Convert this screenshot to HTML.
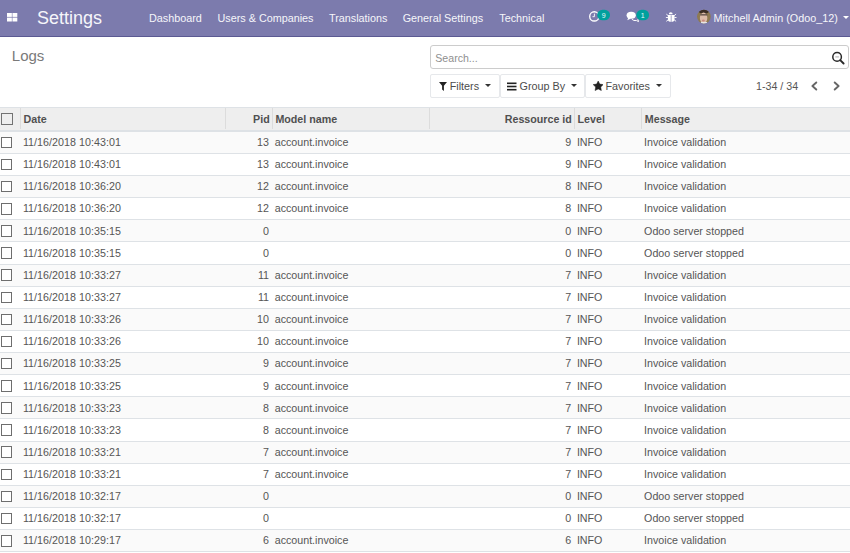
<!DOCTYPE html><html><head><meta charset="utf-8"><style>
*{box-sizing:border-box;margin:0;padding:0}
html,body{width:850px;height:553px;overflow:hidden;background:#fff}
body{position:relative;font-family:"Liberation Sans",sans-serif;font-size:10.8px;color:#555}
.a{position:absolute;white-space:pre}
#nav{position:absolute;left:0;top:0;width:850px;height:37px;background:#7c7bad;border-bottom:1.1px solid #5b5a92}
.nv{position:absolute;top:0;height:36px;line-height:36px;color:#f6f6fa;font-size:10.8px;white-space:pre}
.brand{font-size:18px}
.btn{position:absolute;top:74.2px;height:23.4px;border:1px solid #e6e8eb;border-radius:2px;background:#fff;color:#4c4c4c;line-height:21px;font-size:10.8px}
.cb{position:absolute;width:11.5px;height:11.5px;border:1.2px solid #6e6e6e;border-radius:0;background:#fff}
.hdr{position:absolute;left:0;width:850px;background:#eee}
.row{position:absolute;left:0;width:850px;border-bottom:1px solid #dee2e6}
.odd{background:#fafafa}
.cell{position:absolute;white-space:pre;line-height:22px;height:22px;font-size:10.7px}
.th{font-weight:bold;color:#505050;margin-left:0.7px}
.dt{letter-spacing:0.045px}
.vd{position:absolute;width:1px;background:#dcdcdc}
.caret{position:absolute;width:0;height:0;border-left:3px solid transparent;border-right:3px solid transparent;border-top:3.5px solid #333}
</style></head><body>
<div id="nav"></div>
<svg class="a" style="left:6.5px;top:12.7px" width="11" height="9" viewBox="0 0 11 9"><rect x="0" y="0" width="4.85" height="3.9" fill="#fff"/><rect x="5.45" y="0" width="4.85" height="3.9" fill="#fff"/><rect x="0" y="4.6" width="4.85" height="3.9" fill="#fff"/><rect x="5.45" y="4.6" width="4.85" height="3.9" fill="#fff"/></svg>
<div class="nv brand" style="left:37px">Settings</div>
<div class="nv" style="left:149px">Dashboard</div>
<div class="nv" style="left:217.5px">Users &amp; Companies</div>
<div class="nv" style="left:329px">Translations</div>
<div class="nv" style="left:402.7px">General Settings</div>
<div class="nv" style="left:499.3px">Technical</div>
<svg class="a" style="left:0;top:0" width="850" height="37" viewBox="0 0 850 37">
<circle cx="594.3" cy="16.4" r="4.6" fill="none" stroke="#fff" stroke-width="1.35"/>
<path d="M594.4 13.6 V16.7 H592.5" fill="none" stroke="#fff" stroke-width="0.9"/>
<rect x="597.2" y="9.7" width="12.8" height="10.6" rx="5.3" fill="#00a09d"/>
<text x="603.6" y="17.6" font-family="Liberation Sans" font-size="7" fill="#e8fbfa" text-anchor="middle">9</text>
<ellipse cx="631.2" cy="15.3" rx="4.6" ry="3.5" fill="#fff"/>
<path d="M628.3 17.5 L627.3 20.2 L631 18.5z" fill="#fff"/>
<path d="M631.8 19.2 Q633.5 21 636.6 20.6 L638.5 21.6 L637.9 19.4 Q638.6 18.6 638.6 17.8" fill="none" stroke="#fff" stroke-width="1"/>
<rect x="636.3" y="9.7" width="12.8" height="10.6" rx="5.3" fill="#00a09d"/>
<text x="642.7" y="17.6" font-family="Liberation Sans" font-size="7" fill="#e8fbfa" text-anchor="middle">1</text>
<path d="M668.8 14.2 A1.95 2 0 0 1 672.7 14.2z" fill="#fff"/>
<path d="M667.9 15 H674.5 V19.5 Q674.5 21.8 671.2 21.8 Q667.9 21.8 667.9 19.5z" fill="#fff"/>
<path d="M671.2 15.3 V21.8" stroke="#8a89b8" stroke-width="0.75"/>
<path d="M666.3 14.1 L668.2 15.6 M676.1 14.1 L674.2 15.6 M665.9 17.5 H668 M676.5 17.5 H674.4 M666.3 21.3 L668.2 19.9 M676.1 21.3 L674.2 19.9" stroke="#fff" stroke-width="0.9"/>
<defs><clipPath id="av"><circle cx="703.9" cy="16.6" r="6.9"/></clipPath></defs>
<g clip-path="url(#av)">
<rect x="696" y="9" width="16" height="16" fill="#8e7a52"/>
<ellipse cx="703.8" cy="11" rx="5" ry="2.6" fill="#3b2d24"/>
<ellipse cx="703.6" cy="18" rx="3.7" ry="5.4" fill="#dcbcaa"/>
<rect x="700.3" y="14.2" width="7" height="1.3" fill="#5a4a44"/>
<ellipse cx="703.4" cy="20.5" rx="1.5" ry="0.9" fill="#c98a80"/>
<rect x="701" y="22" width="6" height="3" fill="#e6e6e6"/>
</g>
</svg>
<div class="nv" style="left:713.6px">Mitchell Admin (Odoo_12)</div>
<div class="caret" style="left:842.8px;top:16.2px;border-top-color:#fff"></div>
<div class="a" style="left:11.8px;top:45.6px;font-size:15px;line-height:20px;color:#7a7a7a">Logs</div>
<div class="a" style="left:430px;top:45px;width:418.5px;height:23.5px;border:1px solid #ccc;border-radius:3px"></div>
<div class="a" style="left:435.3px;top:46.8px;line-height:23px;color:#8f8f8f;font-size:10.6px">Search...</div>
<svg class="a" style="left:830px;top:50px" width="16" height="16" viewBox="830 50 16 16"><circle cx="837.1" cy="56.9" r="4.3" fill="#fff" stroke="#2a2a2a" stroke-width="1.5"/><path d="M835.3 56.9 H838.9" stroke="#bbb" stroke-width="1.2"/><path d="M840.2 60.1 L843.6 63.5" stroke="#2a2a2a" stroke-width="1.9" stroke-linecap="round"/></svg>
<div class="btn" style="left:430px;width:69.7px"></div>
<svg class="a" style="left:438.7px;top:81.5px" width="8" height="9" viewBox="0 0 8 9"><path d="M0 0 H8 L4.9 3.8 V9 L3.1 7.6 V3.8z" fill="#222"/></svg>
<div class="a" style="left:449.7px;top:74.5px;line-height:23px;color:#4c4c4c">Filters</div>
<div class="caret" style="left:485px;top:84px"></div>
<div class="btn" style="left:499.7px;width:85px"></div>
<svg class="a" style="left:507px;top:81.5px" width="10" height="9" viewBox="0 0 10 9"><rect x="0" y="0.5" width="9.5" height="1.6" fill="#222"/><rect x="0" y="3.7" width="9.5" height="1.6" fill="#222"/><rect x="0" y="6.9" width="9.5" height="1.6" fill="#222"/></svg>
<div class="a" style="left:519.6px;top:74.5px;line-height:23px;color:#4c4c4c">Group By</div>
<div class="caret" style="left:570.5px;top:84px"></div>
<div class="btn" style="left:585px;width:85.5px"></div>
<svg class="a" style="left:592.6px;top:81.2px" width="10.4" height="10" viewBox="0 0 24 23"><path d="M12 0 L15.6 7.1 L23.6 8.3 L17.8 13.9 L19.2 22 L12 18.2 L4.8 22 L6.2 13.9 L0.4 8.3 L8.4 7.1z" fill="#222" stroke="#222" stroke-width="1.2" stroke-linejoin="round"/></svg>
<div class="a" style="left:605.5px;top:74.5px;line-height:23px;color:#4c4c4c">Favorites</div>
<div class="caret" style="left:655.5px;top:84px"></div>
<div class="a" style="left:756px;top:74.8px;line-height:23px;color:#555;font-size:10.7px">1-34 / 34</div>
<svg class="a" style="left:809.7px;top:81px" width="8" height="10" viewBox="0 0 8 10"><path d="M6.3 1.5 L2.4 5 L6.3 8.5" fill="none" stroke="#666" stroke-width="1.9" stroke-linecap="round" stroke-linejoin="round"/></svg>
<svg class="a" style="left:833px;top:81px" width="8" height="10" viewBox="0 0 8 10"><path d="M1.7 1.5 L5.6 5 L1.7 8.5" fill="none" stroke="#666" stroke-width="1.9" stroke-linecap="round" stroke-linejoin="round"/></svg>
<div class="hdr" style="top:106.5px;height:25.30000000000001px;border-top:1px solid #dee2e6;border-bottom:2.5px solid #dee2e6"></div>
<div class="vd" style="left:20.1px;top:107.5px;height:21.80000000000001px"></div>
<div class="vd" style="left:225.1px;top:107.5px;height:21.80000000000001px"></div>
<div class="vd" style="left:271.9px;top:107.5px;height:21.80000000000001px"></div>
<div class="vd" style="left:428.9px;top:107.5px;height:21.80000000000001px"></div>
<div class="vd" style="left:574.1px;top:107.5px;height:21.80000000000001px"></div>
<div class="vd" style="left:641.3px;top:107.5px;height:21.80000000000001px"></div>
<div class="cb" style="left:1.4px;top:113px;width:11.6px;height:12px;background:transparent;border-color:#727272"></div>
<div class="cell th" style="left:22.900000000000002px;top:108.7px;height:21.80000000000001px;line-height:21.80000000000001px">Date</div>
<div class="cell th" style="left:225.6px;width:43.399999999999984px;text-align:right;top:108.7px;height:21.80000000000001px;line-height:21.80000000000001px">Pid</div>
<div class="cell th" style="left:274.7px;top:108.7px;height:21.80000000000001px;line-height:21.80000000000001px">Model name</div>
<div class="cell th" style="left:429.4px;width:141.80000000000004px;text-align:right;top:108.7px;height:21.80000000000001px;line-height:21.80000000000001px">Ressource id</div>
<div class="cell th" style="left:576.9px;top:108.7px;height:21.80000000000001px;line-height:21.80000000000001px">Level</div>
<div class="cell th" style="left:644.0999999999999px;top:108.7px;height:21.80000000000001px;line-height:21.80000000000001px">Message</div>
<div class="row odd" style="top:131.80px;height:22.13px"></div>
<div class="cb" style="left:1px;top:136.66px;width:11px"></div>
<div class="cell dt" style="left:22.900000000000002px;top:132.1px;height:21.13px;line-height:21.13px">11/16/2018 10:43:01</div>
<div class="cell " style="left:225.6px;width:43.399999999999984px;text-align:right;top:132.1px;height:21.13px;line-height:21.13px">13</div>
<div class="cell " style="left:274.7px;top:132.1px;height:21.13px;line-height:21.13px">account.invoice</div>
<div class="cell " style="left:429.4px;width:141.80000000000004px;text-align:right;top:132.1px;height:21.13px;line-height:21.13px">9</div>
<div class="cell " style="left:576.9px;top:132.1px;height:21.13px;line-height:21.13px">INFO</div>
<div class="cell " style="left:644.0999999999999px;top:132.1px;height:21.13px;line-height:21.13px">Invoice validation</div>
<div class="row" style="top:153.93px;height:22.13px"></div>
<div class="cb" style="left:1px;top:158.79px;width:11px"></div>
<div class="cell dt" style="left:22.900000000000002px;top:154.23px;height:21.13px;line-height:21.13px">11/16/2018 10:43:01</div>
<div class="cell " style="left:225.6px;width:43.399999999999984px;text-align:right;top:154.23px;height:21.13px;line-height:21.13px">13</div>
<div class="cell " style="left:274.7px;top:154.23px;height:21.13px;line-height:21.13px">account.invoice</div>
<div class="cell " style="left:429.4px;width:141.80000000000004px;text-align:right;top:154.23px;height:21.13px;line-height:21.13px">9</div>
<div class="cell " style="left:576.9px;top:154.23px;height:21.13px;line-height:21.13px">INFO</div>
<div class="cell " style="left:644.0999999999999px;top:154.23px;height:21.13px;line-height:21.13px">Invoice validation</div>
<div class="row odd" style="top:176.06px;height:22.13px"></div>
<div class="cb" style="left:1px;top:180.92px;width:11px"></div>
<div class="cell dt" style="left:22.900000000000002px;top:176.36px;height:21.13px;line-height:21.13px">11/16/2018 10:36:20</div>
<div class="cell " style="left:225.6px;width:43.399999999999984px;text-align:right;top:176.36px;height:21.13px;line-height:21.13px">12</div>
<div class="cell " style="left:274.7px;top:176.36px;height:21.13px;line-height:21.13px">account.invoice</div>
<div class="cell " style="left:429.4px;width:141.80000000000004px;text-align:right;top:176.36px;height:21.13px;line-height:21.13px">8</div>
<div class="cell " style="left:576.9px;top:176.36px;height:21.13px;line-height:21.13px">INFO</div>
<div class="cell " style="left:644.0999999999999px;top:176.36px;height:21.13px;line-height:21.13px">Invoice validation</div>
<div class="row" style="top:198.19px;height:22.13px"></div>
<div class="cb" style="left:1px;top:203.05px;width:11px"></div>
<div class="cell dt" style="left:22.900000000000002px;top:198.49px;height:21.13px;line-height:21.13px">11/16/2018 10:36:20</div>
<div class="cell " style="left:225.6px;width:43.399999999999984px;text-align:right;top:198.49px;height:21.13px;line-height:21.13px">12</div>
<div class="cell " style="left:274.7px;top:198.49px;height:21.13px;line-height:21.13px">account.invoice</div>
<div class="cell " style="left:429.4px;width:141.80000000000004px;text-align:right;top:198.49px;height:21.13px;line-height:21.13px">8</div>
<div class="cell " style="left:576.9px;top:198.49px;height:21.13px;line-height:21.13px">INFO</div>
<div class="cell " style="left:644.0999999999999px;top:198.49px;height:21.13px;line-height:21.13px">Invoice validation</div>
<div class="row odd" style="top:220.32px;height:22.13px"></div>
<div class="cb" style="left:1px;top:225.18px;width:11px"></div>
<div class="cell dt" style="left:22.900000000000002px;top:220.62px;height:21.13px;line-height:21.13px">11/16/2018 10:35:15</div>
<div class="cell " style="left:225.6px;width:43.399999999999984px;text-align:right;top:220.62px;height:21.13px;line-height:21.13px">0</div>
<div class="cell " style="left:274.7px;top:220.62px;height:21.13px;line-height:21.13px"></div>
<div class="cell " style="left:429.4px;width:141.80000000000004px;text-align:right;top:220.62px;height:21.13px;line-height:21.13px">0</div>
<div class="cell " style="left:576.9px;top:220.62px;height:21.13px;line-height:21.13px">INFO</div>
<div class="cell " style="left:644.0999999999999px;top:220.62px;height:21.13px;line-height:21.13px">Odoo server stopped</div>
<div class="row" style="top:242.45px;height:22.13px"></div>
<div class="cb" style="left:1px;top:247.31px;width:11px"></div>
<div class="cell dt" style="left:22.900000000000002px;top:242.75px;height:21.13px;line-height:21.13px">11/16/2018 10:35:15</div>
<div class="cell " style="left:225.6px;width:43.399999999999984px;text-align:right;top:242.75px;height:21.13px;line-height:21.13px">0</div>
<div class="cell " style="left:274.7px;top:242.75px;height:21.13px;line-height:21.13px"></div>
<div class="cell " style="left:429.4px;width:141.80000000000004px;text-align:right;top:242.75px;height:21.13px;line-height:21.13px">0</div>
<div class="cell " style="left:576.9px;top:242.75px;height:21.13px;line-height:21.13px">INFO</div>
<div class="cell " style="left:644.0999999999999px;top:242.75px;height:21.13px;line-height:21.13px">Odoo server stopped</div>
<div class="row odd" style="top:264.58px;height:22.13px"></div>
<div class="cb" style="left:1px;top:269.45px;width:11px"></div>
<div class="cell dt" style="left:22.900000000000002px;top:264.88px;height:21.13px;line-height:21.13px">11/16/2018 10:33:27</div>
<div class="cell " style="left:225.6px;width:43.399999999999984px;text-align:right;top:264.88px;height:21.13px;line-height:21.13px">11</div>
<div class="cell " style="left:274.7px;top:264.88px;height:21.13px;line-height:21.13px">account.invoice</div>
<div class="cell " style="left:429.4px;width:141.80000000000004px;text-align:right;top:264.88px;height:21.13px;line-height:21.13px">7</div>
<div class="cell " style="left:576.9px;top:264.88px;height:21.13px;line-height:21.13px">INFO</div>
<div class="cell " style="left:644.0999999999999px;top:264.88px;height:21.13px;line-height:21.13px">Invoice validation</div>
<div class="row" style="top:286.71px;height:22.13px"></div>
<div class="cb" style="left:1px;top:291.58px;width:11px"></div>
<div class="cell dt" style="left:22.900000000000002px;top:287.01px;height:21.13px;line-height:21.13px">11/16/2018 10:33:27</div>
<div class="cell " style="left:225.6px;width:43.399999999999984px;text-align:right;top:287.01px;height:21.13px;line-height:21.13px">11</div>
<div class="cell " style="left:274.7px;top:287.01px;height:21.13px;line-height:21.13px">account.invoice</div>
<div class="cell " style="left:429.4px;width:141.80000000000004px;text-align:right;top:287.01px;height:21.13px;line-height:21.13px">7</div>
<div class="cell " style="left:576.9px;top:287.01px;height:21.13px;line-height:21.13px">INFO</div>
<div class="cell " style="left:644.0999999999999px;top:287.01px;height:21.13px;line-height:21.13px">Invoice validation</div>
<div class="row odd" style="top:308.84px;height:22.13px"></div>
<div class="cb" style="left:1px;top:313.71px;width:11px"></div>
<div class="cell dt" style="left:22.900000000000002px;top:309.14px;height:21.13px;line-height:21.13px">11/16/2018 10:33:26</div>
<div class="cell " style="left:225.6px;width:43.399999999999984px;text-align:right;top:309.14px;height:21.13px;line-height:21.13px">10</div>
<div class="cell " style="left:274.7px;top:309.14px;height:21.13px;line-height:21.13px">account.invoice</div>
<div class="cell " style="left:429.4px;width:141.80000000000004px;text-align:right;top:309.14px;height:21.13px;line-height:21.13px">7</div>
<div class="cell " style="left:576.9px;top:309.14px;height:21.13px;line-height:21.13px">INFO</div>
<div class="cell " style="left:644.0999999999999px;top:309.14px;height:21.13px;line-height:21.13px">Invoice validation</div>
<div class="row" style="top:330.97px;height:22.13px"></div>
<div class="cb" style="left:1px;top:335.84px;width:11px"></div>
<div class="cell dt" style="left:22.900000000000002px;top:331.27px;height:21.13px;line-height:21.13px">11/16/2018 10:33:26</div>
<div class="cell " style="left:225.6px;width:43.399999999999984px;text-align:right;top:331.27px;height:21.13px;line-height:21.13px">10</div>
<div class="cell " style="left:274.7px;top:331.27px;height:21.13px;line-height:21.13px">account.invoice</div>
<div class="cell " style="left:429.4px;width:141.80000000000004px;text-align:right;top:331.27px;height:21.13px;line-height:21.13px">7</div>
<div class="cell " style="left:576.9px;top:331.27px;height:21.13px;line-height:21.13px">INFO</div>
<div class="cell " style="left:644.0999999999999px;top:331.27px;height:21.13px;line-height:21.13px">Invoice validation</div>
<div class="row odd" style="top:353.10px;height:22.13px"></div>
<div class="cb" style="left:1px;top:357.97px;width:11px"></div>
<div class="cell dt" style="left:22.900000000000002px;top:353.4px;height:21.13px;line-height:21.13px">11/16/2018 10:33:25</div>
<div class="cell " style="left:225.6px;width:43.399999999999984px;text-align:right;top:353.4px;height:21.13px;line-height:21.13px">9</div>
<div class="cell " style="left:274.7px;top:353.4px;height:21.13px;line-height:21.13px">account.invoice</div>
<div class="cell " style="left:429.4px;width:141.80000000000004px;text-align:right;top:353.4px;height:21.13px;line-height:21.13px">7</div>
<div class="cell " style="left:576.9px;top:353.4px;height:21.13px;line-height:21.13px">INFO</div>
<div class="cell " style="left:644.0999999999999px;top:353.4px;height:21.13px;line-height:21.13px">Invoice validation</div>
<div class="row" style="top:375.23px;height:22.13px"></div>
<div class="cb" style="left:1px;top:380.10px;width:11px"></div>
<div class="cell dt" style="left:22.900000000000002px;top:375.53px;height:21.13px;line-height:21.13px">11/16/2018 10:33:25</div>
<div class="cell " style="left:225.6px;width:43.399999999999984px;text-align:right;top:375.53px;height:21.13px;line-height:21.13px">9</div>
<div class="cell " style="left:274.7px;top:375.53px;height:21.13px;line-height:21.13px">account.invoice</div>
<div class="cell " style="left:429.4px;width:141.80000000000004px;text-align:right;top:375.53px;height:21.13px;line-height:21.13px">7</div>
<div class="cell " style="left:576.9px;top:375.53px;height:21.13px;line-height:21.13px">INFO</div>
<div class="cell " style="left:644.0999999999999px;top:375.53px;height:21.13px;line-height:21.13px">Invoice validation</div>
<div class="row odd" style="top:397.36px;height:22.13px"></div>
<div class="cb" style="left:1px;top:402.23px;width:11px"></div>
<div class="cell dt" style="left:22.900000000000002px;top:397.66px;height:21.13px;line-height:21.13px">11/16/2018 10:33:23</div>
<div class="cell " style="left:225.6px;width:43.399999999999984px;text-align:right;top:397.66px;height:21.13px;line-height:21.13px">8</div>
<div class="cell " style="left:274.7px;top:397.66px;height:21.13px;line-height:21.13px">account.invoice</div>
<div class="cell " style="left:429.4px;width:141.80000000000004px;text-align:right;top:397.66px;height:21.13px;line-height:21.13px">7</div>
<div class="cell " style="left:576.9px;top:397.66px;height:21.13px;line-height:21.13px">INFO</div>
<div class="cell " style="left:644.0999999999999px;top:397.66px;height:21.13px;line-height:21.13px">Invoice validation</div>
<div class="row" style="top:419.49px;height:22.13px"></div>
<div class="cb" style="left:1px;top:424.36px;width:11px"></div>
<div class="cell dt" style="left:22.900000000000002px;top:419.79px;height:21.13px;line-height:21.13px">11/16/2018 10:33:23</div>
<div class="cell " style="left:225.6px;width:43.399999999999984px;text-align:right;top:419.79px;height:21.13px;line-height:21.13px">8</div>
<div class="cell " style="left:274.7px;top:419.79px;height:21.13px;line-height:21.13px">account.invoice</div>
<div class="cell " style="left:429.4px;width:141.80000000000004px;text-align:right;top:419.79px;height:21.13px;line-height:21.13px">7</div>
<div class="cell " style="left:576.9px;top:419.79px;height:21.13px;line-height:21.13px">INFO</div>
<div class="cell " style="left:644.0999999999999px;top:419.79px;height:21.13px;line-height:21.13px">Invoice validation</div>
<div class="row odd" style="top:441.62px;height:22.13px"></div>
<div class="cb" style="left:1px;top:446.49px;width:11px"></div>
<div class="cell dt" style="left:22.900000000000002px;top:441.92px;height:21.13px;line-height:21.13px">11/16/2018 10:33:21</div>
<div class="cell " style="left:225.6px;width:43.399999999999984px;text-align:right;top:441.92px;height:21.13px;line-height:21.13px">7</div>
<div class="cell " style="left:274.7px;top:441.92px;height:21.13px;line-height:21.13px">account.invoice</div>
<div class="cell " style="left:429.4px;width:141.80000000000004px;text-align:right;top:441.92px;height:21.13px;line-height:21.13px">7</div>
<div class="cell " style="left:576.9px;top:441.92px;height:21.13px;line-height:21.13px">INFO</div>
<div class="cell " style="left:644.0999999999999px;top:441.92px;height:21.13px;line-height:21.13px">Invoice validation</div>
<div class="row" style="top:463.75px;height:22.13px"></div>
<div class="cb" style="left:1px;top:468.62px;width:11px"></div>
<div class="cell dt" style="left:22.900000000000002px;top:464.05px;height:21.13px;line-height:21.13px">11/16/2018 10:33:21</div>
<div class="cell " style="left:225.6px;width:43.399999999999984px;text-align:right;top:464.05px;height:21.13px;line-height:21.13px">7</div>
<div class="cell " style="left:274.7px;top:464.05px;height:21.13px;line-height:21.13px">account.invoice</div>
<div class="cell " style="left:429.4px;width:141.80000000000004px;text-align:right;top:464.05px;height:21.13px;line-height:21.13px">7</div>
<div class="cell " style="left:576.9px;top:464.05px;height:21.13px;line-height:21.13px">INFO</div>
<div class="cell " style="left:644.0999999999999px;top:464.05px;height:21.13px;line-height:21.13px">Invoice validation</div>
<div class="row odd" style="top:485.88px;height:22.13px"></div>
<div class="cb" style="left:1px;top:490.75px;width:11px"></div>
<div class="cell dt" style="left:22.900000000000002px;top:486.18px;height:21.13px;line-height:21.13px">11/16/2018 10:32:17</div>
<div class="cell " style="left:225.6px;width:43.399999999999984px;text-align:right;top:486.18px;height:21.13px;line-height:21.13px">0</div>
<div class="cell " style="left:274.7px;top:486.18px;height:21.13px;line-height:21.13px"></div>
<div class="cell " style="left:429.4px;width:141.80000000000004px;text-align:right;top:486.18px;height:21.13px;line-height:21.13px">0</div>
<div class="cell " style="left:576.9px;top:486.18px;height:21.13px;line-height:21.13px">INFO</div>
<div class="cell " style="left:644.0999999999999px;top:486.18px;height:21.13px;line-height:21.13px">Odoo server stopped</div>
<div class="row" style="top:508.01px;height:22.13px"></div>
<div class="cb" style="left:1px;top:512.88px;width:11px"></div>
<div class="cell dt" style="left:22.900000000000002px;top:508.31px;height:21.13px;line-height:21.13px">11/16/2018 10:32:17</div>
<div class="cell " style="left:225.6px;width:43.399999999999984px;text-align:right;top:508.31px;height:21.13px;line-height:21.13px">0</div>
<div class="cell " style="left:274.7px;top:508.31px;height:21.13px;line-height:21.13px"></div>
<div class="cell " style="left:429.4px;width:141.80000000000004px;text-align:right;top:508.31px;height:21.13px;line-height:21.13px">0</div>
<div class="cell " style="left:576.9px;top:508.31px;height:21.13px;line-height:21.13px">INFO</div>
<div class="cell " style="left:644.0999999999999px;top:508.31px;height:21.13px;line-height:21.13px">Odoo server stopped</div>
<div class="row odd" style="top:530.14px;height:22.13px"></div>
<div class="cb" style="left:1px;top:535.00px;width:11px"></div>
<div class="cell dt" style="left:22.900000000000002px;top:530.44px;height:21.13px;line-height:21.13px">11/16/2018 10:29:17</div>
<div class="cell " style="left:225.6px;width:43.399999999999984px;text-align:right;top:530.44px;height:21.13px;line-height:21.13px">6</div>
<div class="cell " style="left:274.7px;top:530.44px;height:21.13px;line-height:21.13px">account.invoice</div>
<div class="cell " style="left:429.4px;width:141.80000000000004px;text-align:right;top:530.44px;height:21.13px;line-height:21.13px">6</div>
<div class="cell " style="left:576.9px;top:530.44px;height:21.13px;line-height:21.13px">INFO</div>
<div class="cell " style="left:644.0999999999999px;top:530.44px;height:21.13px;line-height:21.13px">Invoice validation</div>
</body></html>
